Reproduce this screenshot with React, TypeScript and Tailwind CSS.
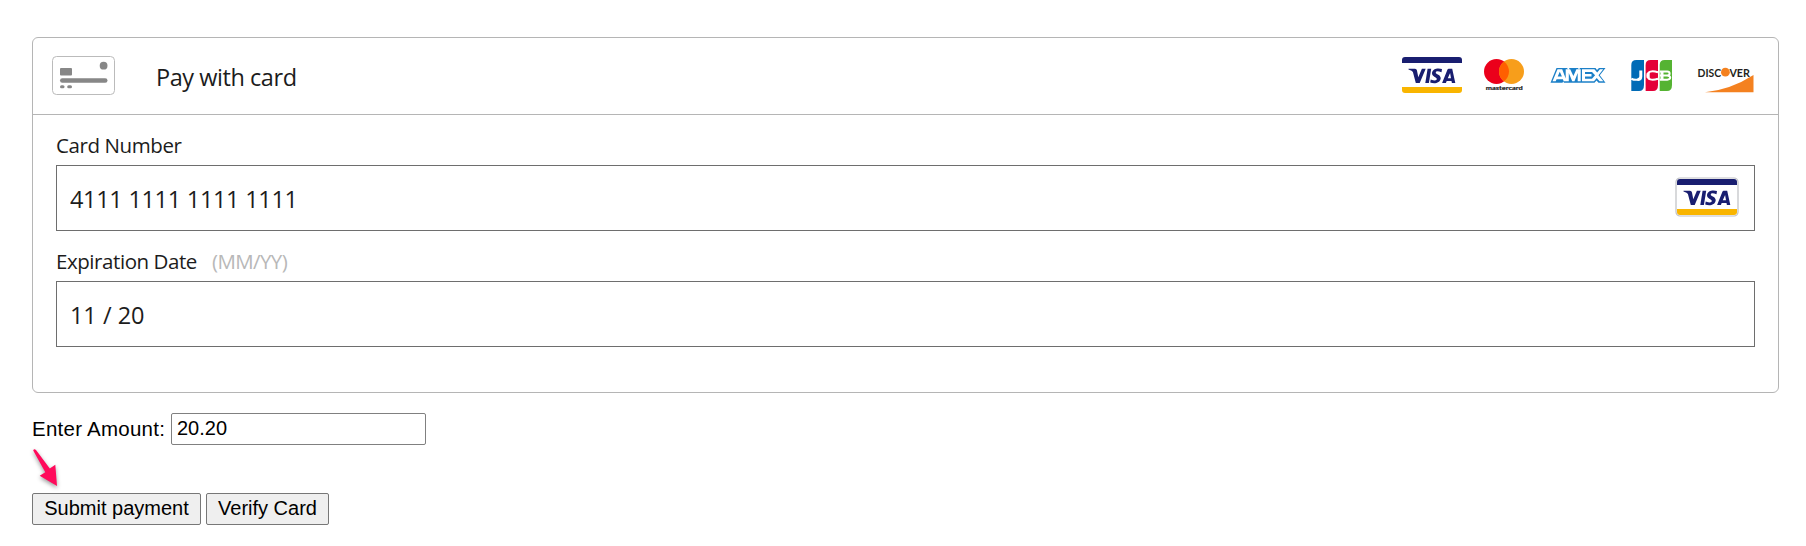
function Visa({ framed = false }: { framed?: boolean }) {
  return (
    <svg width="64" height="40" viewBox="0 0 64 40" className="block shrink-0">
      {framed && <rect x="1" y="1" width="62" height="38" rx="4" fill="#fff" stroke="#bfc0c4" strokeWidth="1.2" />}
      <path d="M2 8V5Q2 2 5 2H59Q62 2 62 5V8Z" fill="#191e70" />
      <path d="M2 32V35Q2 38 5 38H59Q62 38 62 35V32Z" fill="#f9b500" />
      <g fill="#191e70">
        <path d="M8.500 13.700H15Q16.600 13.700 16.900 15.200L18.300 22.300L21.900 13.700H25.700L19.700 28H15.800L12.900 17Q12.400 15.500 8.500 14.500Z" />
        <path d="M27.600 13.700H31.200L28.900 28H25.300Z" />
        <path d="M42 14.100L41.500 17.200Q35.800 15.300 35.700 17.700C35.700 19.100 41 19.700 40.700 23.300C40.200 28.700 33.700 29 30.200 27.500L30.700 24.400Q36.500 26.600 36.900 24C37 22.300 31.700 21.800 32 18C32.500 13.300 38.500 12.700 42 14.100Z" />
        <path fillRule="evenodd" d="M48.700 13.700H52.200L55.300 28H51.900L51.500 25.900H46.700L45.900 28H42.100L47.300 15Q47.800 13.700 48.700 13.700ZM50.100 18L47.800 23.200H51Z" />
      </g>
    </svg>
  );
}

function Mastercard() {
  return (
    <svg width="42" height="36" viewBox="0 0 42 36" className="block shrink-0 overflow-visible">
      <circle cx="13.500" cy="14.500" r="12.500" fill="#eb001b" />
      <circle cx="28.500" cy="14.500" r="12.500" fill="#f79e1b" />
      <path d="M21 4.500A12.500 12.500 0 0 1 21 24.500A12.500 12.500 0 0 1 21 4.500Z" fill="#ff5f00" />
      <text x="2.800" y="33" fontSize="5.700" textLength="37" lengthAdjust="spacingAndGlyphs" fill="#222" stroke="#222" strokeWidth=".2" fontFamily="Lato, sans-serif" fontWeight="700">mastercard</text>
    </svg>
  );
}

function Amex() {
  return (
    <svg width="56" height="17" viewBox="0 0 56 17" className="block shrink-0">
      <path d="M6.500 1H17L18.500 3L19.500 1H28L29 2.500L30 1H45.500L47 3L49 1H55.500L49.800 8.200L55.500 15.700H48.500L46.500 13.500L44.500 15.700H14L13.200 14.500L12.500 15.700H.5Z" fill="#1c80c8" />
      <path fill="#fff" fillRule="evenodd" d="M7.500 2.300H12.200L15.700 11.500V2.300H20.200L23.400 9L26.400 2.300H30.700V14.300H27.700V6L24.500 14.300H22.200L18.800 6V14.300H13.700L12.900 12.200H6.600L5.700 14.300H2.500ZM9.800 4.800L7.700 9.600H11.900Z" />
      <path fill="#fff" d="M32 2.300H44.400L47.200 5.600L49.900 2.300H53.200L48.500 8.200L53.300 14.300H49.600L46.700 10.900L44 14.300H32ZM35 4.900V7.100H41.500V9.500H35V11.700H42L45.100 8.200L42 4.900Z" />
    </svg>
  );
}

function Jcb() {
  return (
    <svg width="42" height="32" viewBox="0 0 42 32" className="block shrink-0">
      <path d="M.3 23V5Q.3 0 5.300 0H13V25Q13 31 8 31H.3Z" fill="#006bb6" />
      <path d="M14.600 23V5Q14.600 0 19.600 0H27V25Q27 31 22 31H14.600Z" fill="#e40138" />
      <path d="M28.700 23V5Q28.700 0 33.700 0H41V25Q41 31 36 31H28.700Z" fill="#55b332" />
      <g fill="none" stroke="#fff" strokeWidth="2">
        <path strokeWidth="3" d="M9.800 10.500V16.500Q9.800 19.500 6.500 19.500" />
        <path d="M8 19.500Q3.500 20.500 .3 18.700" />
        <path d="M27 12.200C20.500 10.200 16.500 11.500 16.500 15.500S20.500 20.800 27 18.800" />
        <path d="M28.700 11.500H36.200Q38.600 11.600 38.600 13.400T36.200 15.400H28.700M36.200 15.400Q39.200 15.700 39.200 17.600T36.200 19.700H28.700" />
        <path strokeWidth="3" d="M17.200 13V18M31 11V20" />
      </g>
    </svg>
  );
}

function Discover() {
  return (
    <svg width="57" height="27" viewBox="0 0 57 27" className="block shrink-0 overflow-visible">
      <g fill="#231f20" fontFamily="Lato, sans-serif" fontWeight="700" fontSize="12">
        <text x="-.4" y="9.500" textLength="23.500" lengthAdjust="spacingAndGlyphs">DISC</text>
        <text x="31.400" y="9.500" textLength="20.500" lengthAdjust="spacingAndGlyphs">VER</text>
      </g>
      <circle cx="27.400" cy="5.200" r="4.400" fill="#f48120" />
      <path d="M55.500 8V25.300H7Q33 22.500 55.500 8Z" fill="#f48120" />
    </svg>
  );
}

function CardIcon() {
  return (
    <svg width="64" height="40" viewBox="0 0 64 40" className="block shrink-0">
      <rect x=".5" y=".5" width="62" height="38" rx="4" fill="#fff" stroke="#bbb" />
      <g fill="#878787">
        <rect x="8" y="12" width="12" height="7.500" rx="1" />
        <rect x="8" y="22.200" width="47.500" height="4.500" rx="2.250" />
        <circle cx="51.600" cy="9.700" r="3.900" />
        <rect x="8" y="29.200" width="4.500" height="3" rx="1.500" />
        <rect x="15.200" y="29.200" width="4.800" height="3" rx="1.500" />
      </g>
    </svg>
  );
}

function PointerArrow() {
  return (
    <svg width="36" height="46" viewBox="0 0 36 46" className="pointer-events-none absolute left-0 top-[3px] [filter:drop-shadow(0_2px_2px_rgba(0,0,0,0.4))]">
      <path d="M1.200 2.500Q2 .5 4 2L17.800 20.500L23.300 16.700L25 38L7.700 27.800L13.300 24.200Z" fill="#ff0a5b" />
    </svg>
  );
}

export default function App() {
  return (
    <main className="h-[546px] w-[1806px] overflow-hidden bg-white pl-8 pt-[37px] text-black">
      <section className="h-[356px] w-[1747px] rounded-[6px] border border-[#b5b5b5] font-['Open_Sans',sans-serif] text-[#1c1c1c]">
        <header className="flex h-[77px] items-center border-b border-[#b5b5b5] pl-[19px] pr-[23px]">
          <CardIcon />
          <h1 className="ml-[40px] mt-[2px] text-[23.500px] leading-8 font-normal tracking-[-0.45px]">Pay with card</h1>
          <div className="ml-auto flex items-center">
            <div className="mb-[2px]"><Visa /></div>
            <div className="mb-[2px] ml-[19px]"><Mastercard /></div>
            <div className="mb-[2px] ml-[25px]"><Amex /></div>
            <div className="ml-[25px]"><Jcb /></div>
            <div className="ml-[25px] mt-[9px]"><Discover /></div>
          </div>
        </header>
        <div className="px-[23px] pt-4">
          <label htmlFor="number" className="block h-[34px] text-[20.500px] leading-7 tracking-[-0.4px]">Card Number</label>
          <div className="flex h-[66px] items-center border border-[#6e6e6e] pl-[13px] pr-[15px]">
            <input id="number" defaultValue="4111 1111 1111 1111" className="mt-px h-8 min-w-0 flex-1 bg-transparent text-[23.500px] leading-8 tracking-[-0.35px] [word-spacing:0.3px] outline-none" />
            <div className="mb-[3px]"><Visa framed /></div>
          </div>
          <label htmlFor="expiration" className="flex h-[50px] pt-4 text-[20.500px] leading-7 tracking-[-0.43px]">
            Expiration Date <span className="ml-[15px] tracking-[-0.6px] text-[#b8b8b8]">(MM/YY)</span>
          </label>
          <div className="flex h-[66px] items-center border border-[#6e6e6e] pl-[13px]">
            <input id="expiration" defaultValue="11 / 20" className="mt-px h-8 w-full bg-transparent text-[23.500px] leading-8 tracking-[-0.3px] [word-spacing:0.8px] outline-none" />
          </div>
        </div>
      </section>
      <form className="font-['Liberation_Sans',sans-serif] text-[20px]" onSubmit={(event) => event.preventDefault()}>
        <div className="flex h-[52px] items-end">
          <label htmlFor="amount" className="w-[139px] pb-px text-[20.500px] leading-[30px] tracking-[0.25px] whitespace-nowrap">Enter Amount:</label>
          <input id="amount" defaultValue="20.20" className="h-8 w-[255px] rounded-[2px] border border-[#808080] px-[5px] pb-[2px] leading-7 outline-none" />
        </div>
        <div className="relative flex gap-[5px] pt-12">
          <PointerArrow />
          <button type="submit" className="h-8 w-[169px] rounded-[2px] border border-[#777] bg-[#efefef] pb-0.5 leading-7 whitespace-nowrap">Submit payment</button>
          <button type="button" className="h-8 w-[123px] rounded-[2px] border border-[#777] bg-[#efefef] pb-0.5 leading-7 whitespace-nowrap">Verify Card</button>
        </div>
      </form>
    </main>
  );
}
